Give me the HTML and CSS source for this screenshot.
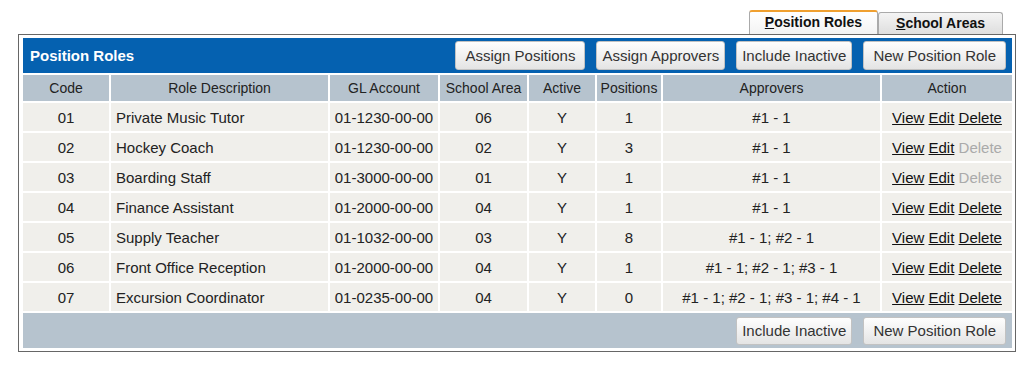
FILE: index.html
```html
<!DOCTYPE html>
<html lang="en">
<head>
  <meta charset="UTF-8">
  <title>Position Roles</title>
  <link rel="stylesheet" href="styles.css">
</head>
<body>
  <div class="tabs">
    <a href="#" class="tab active"><u>P</u>osition Roles</a>
    <a href="#" class="tab"><u>S</u>chool Areas</a>
  </div>

  <div class="panel">
    <div class="panel-head">
      <span class="panel-title">Position Roles</span>
      <div class="btns">
        <button class="wide">Assign Positions</button>
        <button>Assign Approvers</button>
        <button>Include Inactive</button>
        <button class="wide">New Position Role</button>
      </div>
    </div>

    <table class="roles">
      <colgroup>
        <col style="width:86px"><col style="width:217px"><col style="width:108px"><col style="width:87px">
        <col style="width:66px"><col style="width:64px"><col style="width:217px"><col>
      </colgroup>
      <thead>
        <tr>
          <th>Code</th><th>Role Description</th><th>GL Account</th><th>School Area</th>
          <th>Active</th><th>Positions</th><th>Approvers</th><th>Action</th>
        </tr>
      </thead>
      <tbody>
        <tr><td>01</td><td class="desc">Private Music Tutor</td><td>01-1230-00-00</td><td>06</td><td>Y</td><td>1</td><td>#1 - 1</td>
          <td class="act"><a href="#">View</a> <a href="#">Edit</a> <a href="#">Delete</a></td></tr>
        <tr><td>02</td><td class="desc">Hockey Coach</td><td>01-1230-00-00</td><td>02</td><td>Y</td><td>3</td><td>#1 - 1</td>
          <td class="act"><a href="#">View</a> <a href="#">Edit</a> <a class="off">Delete</a></td></tr>
        <tr><td>03</td><td class="desc">Boarding Staff</td><td>01-3000-00-00</td><td>01</td><td>Y</td><td>1</td><td>#1 - 1</td>
          <td class="act"><a href="#">View</a> <a href="#">Edit</a> <a class="off">Delete</a></td></tr>
        <tr><td>04</td><td class="desc">Finance Assistant</td><td>01-2000-00-00</td><td>04</td><td>Y</td><td>1</td><td>#1 - 1</td>
          <td class="act"><a href="#">View</a> <a href="#">Edit</a> <a href="#">Delete</a></td></tr>
        <tr><td>05</td><td class="desc">Supply Teacher</td><td>01-1032-00-00</td><td>03</td><td>Y</td><td>8</td><td>#1 - 1; #2 - 1</td>
          <td class="act"><a href="#">View</a> <a href="#">Edit</a> <a href="#">Delete</a></td></tr>
        <tr><td>06</td><td class="desc">Front Office Reception</td><td>01-2000-00-00</td><td>04</td><td>Y</td><td>1</td><td>#1 - 1; #2 - 1; #3 - 1</td>
          <td class="act"><a href="#">View</a> <a href="#">Edit</a> <a href="#">Delete</a></td></tr>
        <tr><td>07</td><td class="desc">Excursion Coordinator</td><td>01-0235-00-00</td><td>04</td><td>Y</td><td>0</td><td>#1 - 1; #2 - 1; #3 - 1; #4 - 1</td>
          <td class="act"><a href="#">View</a> <a href="#">Edit</a> <a href="#">Delete</a></td></tr>
      </tbody>
      <tfoot>
        <tr>
          <td colspan="8" class="foot">
            <div class="btns">
              <button>Include Inactive</button>
              <button class="wide">New Position Role</button>
            </div>
          </td>
        </tr>
      </tfoot>
    </table>
  </div>
</body>
</html>
```

FILE: styles.css
```css
body {
  margin: 8px;
  font-family: "Liberation Sans", Arial, sans-serif;
  color: #222;
  background: #fff;
}

.tabs {
  display: flex;
  justify-content: flex-end;
  align-items: flex-end;
  height: 24px;
  margin: 2px 0 0 10px;
  width: 985px;
}
.tab {
  display: block;
  box-sizing: border-box;
  height: 22px;
  padding: 0 17px;
  line-height: 20px;
  font-size: 14px;
  font-weight: bold;
  color: #111;
  text-decoration: none;
  border: 1px solid #aaa;
  border-bottom: none;
  border-radius: 3px 3px 0 0;
  background: linear-gradient(#f4f4f4, #dedede);
}
.tab.active {
  height: 24px;
  padding: 0 15px;
  line-height: 21px;
  border-top: 2px solid #f0a030;
  background: linear-gradient(#fff, #f3f3f3);
}

.panel {
  box-sizing: border-box;
  width: 998px;
  margin-left: 10px;
  border: 1px solid #666;
  padding: 3px 3px 3px 4px;
}

.panel-head {
  display: flex;
  align-items: center;
  justify-content: space-between;
  height: 35px;
  padding: 0 6px 0 7px;
  background: #0561b0;
}
.panel-title {
  color: #fff;
  font-size: 15px;
  font-weight: bold;
}

.btns {
  display: flex;
  gap: 11px;
}
button {
  height: 29px;
  padding: 0 5px;
  font-family: "Liberation Sans", Arial, sans-serif;
  font-size: 15px;
  color: #333;
  border: 1px solid #c2c2c2;
  border-radius: 3px;
  background: linear-gradient(#fefefe, #e4e4e4);
}
button.wide {
  padding: 0 9px;
}

.roles {
  width: calc(100% + 4px);
  margin: 0 -2px -2px;
  border-spacing: 2px;
  table-layout: fixed;
  font-size: 15px;
}
.roles th {
  height: 26px;
  padding: 0;
  font-size: 14px;
  font-weight: normal;
  background: #b6c3ce;
}
.roles td {
  height: 28px;
  padding: 0;
  text-align: center;
  background: #f0efeb;
}
.roles td.desc {
  text-align: left;
  padding-left: 5px;
}
.act a {
  color: #111;
}
.act a.off {
  color: #aaa;
}
.roles td.foot {
  height: 35px;
  padding-right: 6px;
  background: #b6c3ce;
}
.foot .btns {
  justify-content: flex-end;
}
.foot button {
  height: 28px;
}
```
